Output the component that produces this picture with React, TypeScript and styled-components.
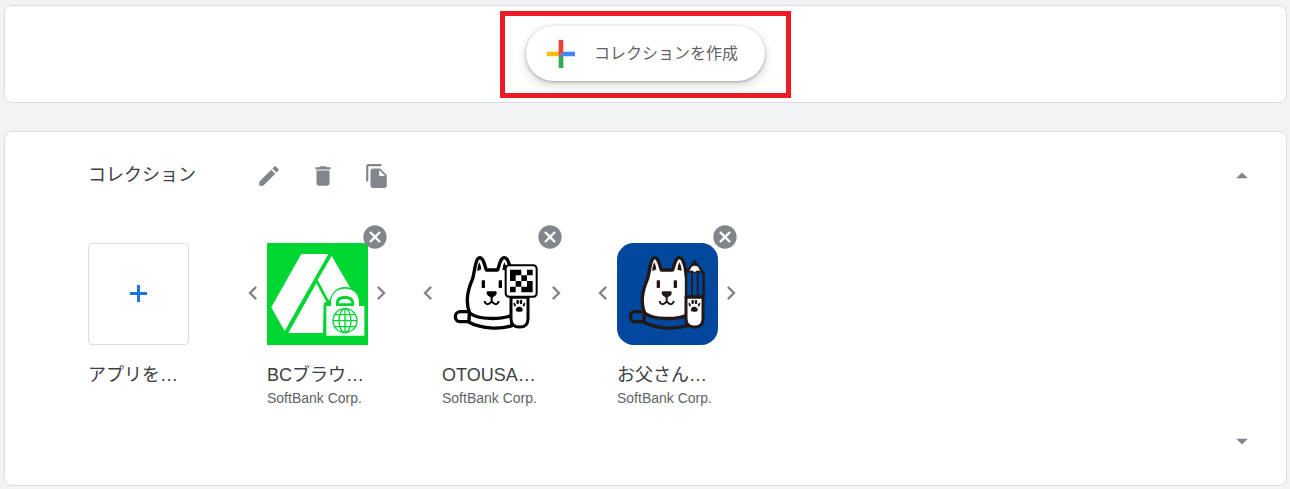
import React from "react";
import styled, { createGlobalStyle } from "styled-components";
import {
  MdArrowDropDown,
  MdArrowDropUp,
  MdCancel,
  MdChevronLeft,
  MdChevronRight,
  MdDelete,
  MdEdit,
  MdFileCopy,
} from "react-icons/md";

const GlobalStyle = createGlobalStyle`
  *, *::before, *::after { box-sizing: border-box; }
  body {
    margin: 0;
    background: #f1f3f4;
    color: #3c4043;
    font-family: "Liberation Sans", "Noto Sans CJK JP", sans-serif;
  }
  button {
    font: inherit;
    color: inherit;
    border: 0;
    padding: 0;
    background: none;
    cursor: pointer;
  }
  svg { display: block; }
`;

const Page = styled.main`
  display: flex;
  flex-direction: column;
  gap: 28px;
  padding: 5px 3px 3px 4px;
`;

const Panel = styled.section`
  background: #fff;
  border: 1px solid #dadce0;
  border-radius: 8px;
`;

const CreatePanel = styled(Panel)`
  display: flex;
  justify-content: center;
  padding: 5px 0 4px;
`;

const Highlight = styled.div`
  border: 5px solid #ed1c24;
  padding: 10px 21px 12px;
`;

const CreateButton = styled.button`
  display: flex;
  align-items: center;
  gap: 12px;
  height: 55px;
  padding: 0 27px 0 14px;
  border-radius: 28px;
  background: #fff;
  color: #5f6368;
  font-size: 16px;
  line-height: 24px;
  white-space: nowrap;
  box-shadow: 0 1px 3px rgba(60, 64, 67, 0.4), 0 4px 8px 2px rgba(60, 64, 67, 0.15);
`;

const CollectionPanel = styled(Panel)`
  padding: 30px 30px 30px 83px;
`;

const Header = styled.header`
  display: flex;
  align-items: center;
  height: 28px;
`;

const Title = styled.h2`
  margin: 0 60px 0 0;
  padding-bottom: 2px;
  font-size: 18px;
  font-weight: 400;
  line-height: 24px;
`;

const Actions = styled.div`
  display: flex;
  flex: 1;
  gap: 28px;
`;

const IconButton = styled.button`
  color: #80868b;
`;

const AppRow = styled.div`
  display: flex;
  align-items: flex-start;
  margin-top: 53px;
`;

const AddItem = styled.div`
  width: 101px;
  margin-right: 50px;
`;

const AddButton = styled.button`
  display: flex;
  align-items: center;
  justify-content: center;
  width: 100%;
  height: 102px;
  padding-bottom: 1px;
  border: 1px solid #dadce0;
  border-radius: 4px;
  color: #1a73e8;
`;

const AppList = styled.ul`
  display: flex;
  gap: 20px;
  margin: 0;
  padding: 0;
  list-style: none;
`;

const AppItem = styled.li`
  display: grid;
  grid-template-columns: 28px 101px 26px;
  justify-items: center;
  align-items: center;
`;

const StepButton = styled(IconButton)`
  padding-bottom: 2px;
`;

const Tile = styled.div`
  position: relative;
  width: 101px;
  height: 102px;
`;

const RemoveButton = styled(IconButton)`
  position: absolute;
  top: -20px;
  right: -21px;
`;

const Caption = styled.div`
  grid-column: 2;
  justify-self: start;
  margin-top: 18px;
  white-space: nowrap;
`;

const Name = styled.div`
  font-size: 18px;
  line-height: 24px;
`;

const Publisher = styled.div`
  color: #5f6368;
  font-size: 14px;
  line-height: 22px;
`;

const Footer = styled.footer`
  display: flex;
  justify-content: flex-end;
  margin-top: 18px;
`;

const ColorPlus = () => (
  <svg width="42" height="42" viewBox="0 0 36 36" aria-hidden="true">
    <path fill="#34a853" d="M16 16v14h4V20z" />
    <path fill="#4285f4" d="M30 16H20l-4 4h14z" />
    <path fill="#fbbc05" d="M6 16v4h10l4-4z" />
    <path fill="#ea4335" d="M20 16V6h-4v14z" />
  </svg>
);

const AddIcon = () => (
  <svg width="17" height="17" viewBox="0 0 17 17" aria-hidden="true">
    <path fill="currentColor" d="M7 0h3v7h7v3h-7v7H7v-7H0V7h7z" />
  </svg>
);

const BrowserArt = () => (
  <svg width="101" height="102" viewBox="81 69 303 306" aria-hidden="true">
    <rect x="81" y="69" width="303" height="306" fill="#00d632" />
    <g fill="#fff">
      <path d="M184 102H265L134 333L94 262Z" />
      <path d="M275 108L332 206L300 220L266 241L233 180Z" />
      <path d="M229 190L259 245L251 250L249 339H145Z" />
    </g>
    <path
      d="M253 252H267C270 222 288 201 315 201C342 201 360 222 363 252H378V352H253Z"
      fill="#00d632"
    />
    <path
      d="M259 258H273V248C273 222 289 206 315 206C341 206 357 222 357 248V258H373V347H259Z"
      fill="#fff"
    />
    <path
      d="M288 258V248C288 234 298 228 315 228C332 228 342 234 342 248V258Z"
      fill="#00d632"
    />
    <path d="M296 250C297 240 305 237 315 237C325 237 333 240 334 250Z" fill="#fff" />
    <g fill="none" stroke="#00d632" strokeWidth="4">
      <circle cx="315" cy="302" r="36" />
      <ellipse cx="315" cy="302" rx="18" ry="36" />
      <path d="M315 266V338M279 302H351M285 284H345M285 320H345" />
    </g>
  </svg>
);

const Dog = ({ ink, collar }: { ink: string; collar: string }) => (
  <>
    <g stroke={ink} strokeWidth="10" strokeLinejoin="round" strokeLinecap="round">
      <path d="M60 185H31A15 15 0 0 0 31 215H58Z" fill={collar} />
      <path d="M58 187C88 206 154 208 186 194V227C148 239 92 236 57 217Z" fill={collar} />
      <path
        d="M59 189C46 158 51 124 68 86C75 60 76 24 89 23C100 23 104 46 109 60H143C148 46 151 23 163 23C173 23 176 38 180 50L190 120V194C154 210 86 210 59 189Z"
        fill="#fff"
      />
    </g>
    <g fill={ink}>
      <path d="M88 37C84 45 82 54 82 64L94 58C93 50 91 43 88 37Z" />
      <path d="M163 37C160 44 158 51 157 59L170 62C169 52 167 44 163 37Z" />
      <rect x="95" y="91" width="10" height="23" rx="2" />
      <rect x="146" y="91" width="10" height="23" rx="2" />
      <path d="M112 124H138C141 126 141 132 137 136L125 145L113 136C109 132 109 126 112 124Z" />
    </g>
    <path
      d="M125 142V154M104 153C104 162 113 165 119 160L125 155L131 160C137 165 146 162 146 153"
      fill="none"
      stroke={ink}
      strokeWidth="6"
    />
  </>
);

const Paw = ({ ink }: { ink: string }) => (
  <>
    <path
      d="M183 142H234V206C234 222 226 231 209 231C191 231 183 222 183 206Z"
      fill="#fff"
      stroke={ink}
      strokeWidth="9"
    />
    <g fill={ink}>
      <path d="M208 170C214 170 220 175 218 181C217 186 212 185 208 185C204 185 199 186 198 181C196 175 202 170 208 170Z" />
      <ellipse cx="194" cy="164" rx="3" ry="6" transform="rotate(-20 194 164)" />
      <ellipse cx="203" cy="156" rx="4" ry="7" />
      <ellipse cx="213" cy="156" rx="4" ry="7" />
      <ellipse cx="222" cy="164" rx="3" ry="6" transform="rotate(20 222 164)" />
    </g>
  </>
);

const CodeReaderArt = () => (
  <svg width="101" height="102" viewBox="-24 -21 303 306" aria-hidden="true">
    <Dog ink="#000" collar="#fff" />
    <Paw ink="#000" />
    <rect x="167" y="46" width="93" height="94" rx="10" fill="#fff" stroke="#000" strokeWidth="6" />
    <path
      d="M180 59H214V76H197V93H180ZM231 59H248V76H231ZM214 76H231V93H214ZM197 93H214V110H197ZM231 93H248V127H214V110H231ZM180 110H197V127H180Z"
      fill="#000"
    />
  </svg>
);

const PencilArt = () => (
  <svg width="101" height="102" viewBox="-24 -21 303 306" aria-hidden="true">
    <rect x="-24" y="-21" width="303" height="306" rx="50" fill="#00479d" />
    <Dog ink="#231815" collar="#00479d" />
    <Paw ink="#231815" />
    <path
      d="M183 70L209 34L236 70V139H183Z"
      fill="#00479d"
      stroke="#231815"
      strokeWidth="7"
      strokeLinejoin="round"
    />
    <path d="M209 30L185 68H234Z" fill="#231815" />
    <path d="M200 50C206 46 213 46 219 50L226 64C219 60 215 62 209 67C204 62 198 60 193 64Z" fill="#fff" />
    <path d="M201 68V138M218 68V138" stroke="#231815" strokeWidth="5" />
  </svg>
);

const apps = [
  { name: "BCブラウ…", publisher: "SoftBank Corp.", Art: BrowserArt },
  { name: "OTOUSA…", publisher: "SoftBank Corp.", Art: CodeReaderArt },
  { name: "お父さん…", publisher: "SoftBank Corp.", Art: PencilArt },
];

export default function App() {
  return (
    <Page lang="ja">
      <GlobalStyle />
      <CreatePanel>
        <Highlight>
          <CreateButton type="button">
            <ColorPlus />
            <span>コレクションを作成</span>
          </CreateButton>
        </Highlight>
      </CreatePanel>
      <CollectionPanel>
        <Header>
          <Title>コレクション</Title>
          <Actions>
            <IconButton type="button" aria-label="編集">
              <MdEdit size={26} />
            </IconButton>
            <IconButton type="button" aria-label="削除">
              <MdDelete size={26} />
            </IconButton>
            <IconButton type="button" aria-label="コピー">
              <MdFileCopy size={26} />
            </IconButton>
          </Actions>
          <IconButton type="button" aria-label="上へ移動">
            <MdArrowDropUp size={28} />
          </IconButton>
        </Header>
        <AppRow>
          <AddItem>
            <AddButton type="button" aria-label="アプリを追加">
              <AddIcon />
            </AddButton>
            <Caption>
              <Name>アプリを…</Name>
            </Caption>
          </AddItem>
          <AppList>
            {apps.map(({ name, publisher, Art }) => (
              <AppItem key={name}>
                <StepButton type="button" aria-label="前へ">
                  <MdChevronLeft size={28} />
                </StepButton>
                <Tile>
                  <Art />
                  <RemoveButton type="button" aria-label="削除">
                    <MdCancel size={28} />
                  </RemoveButton>
                </Tile>
                <StepButton type="button" aria-label="次へ">
                  <MdChevronRight size={28} />
                </StepButton>
                <Caption>
                  <Name>{name}</Name>
                  <Publisher>{publisher}</Publisher>
                </Caption>
              </AppItem>
            ))}
          </AppList>
        </AppRow>
        <Footer>
          <IconButton type="button" aria-label="下へ移動">
            <MdArrowDropDown size={28} />
          </IconButton>
        </Footer>
      </CollectionPanel>
    </Page>
  );
}
